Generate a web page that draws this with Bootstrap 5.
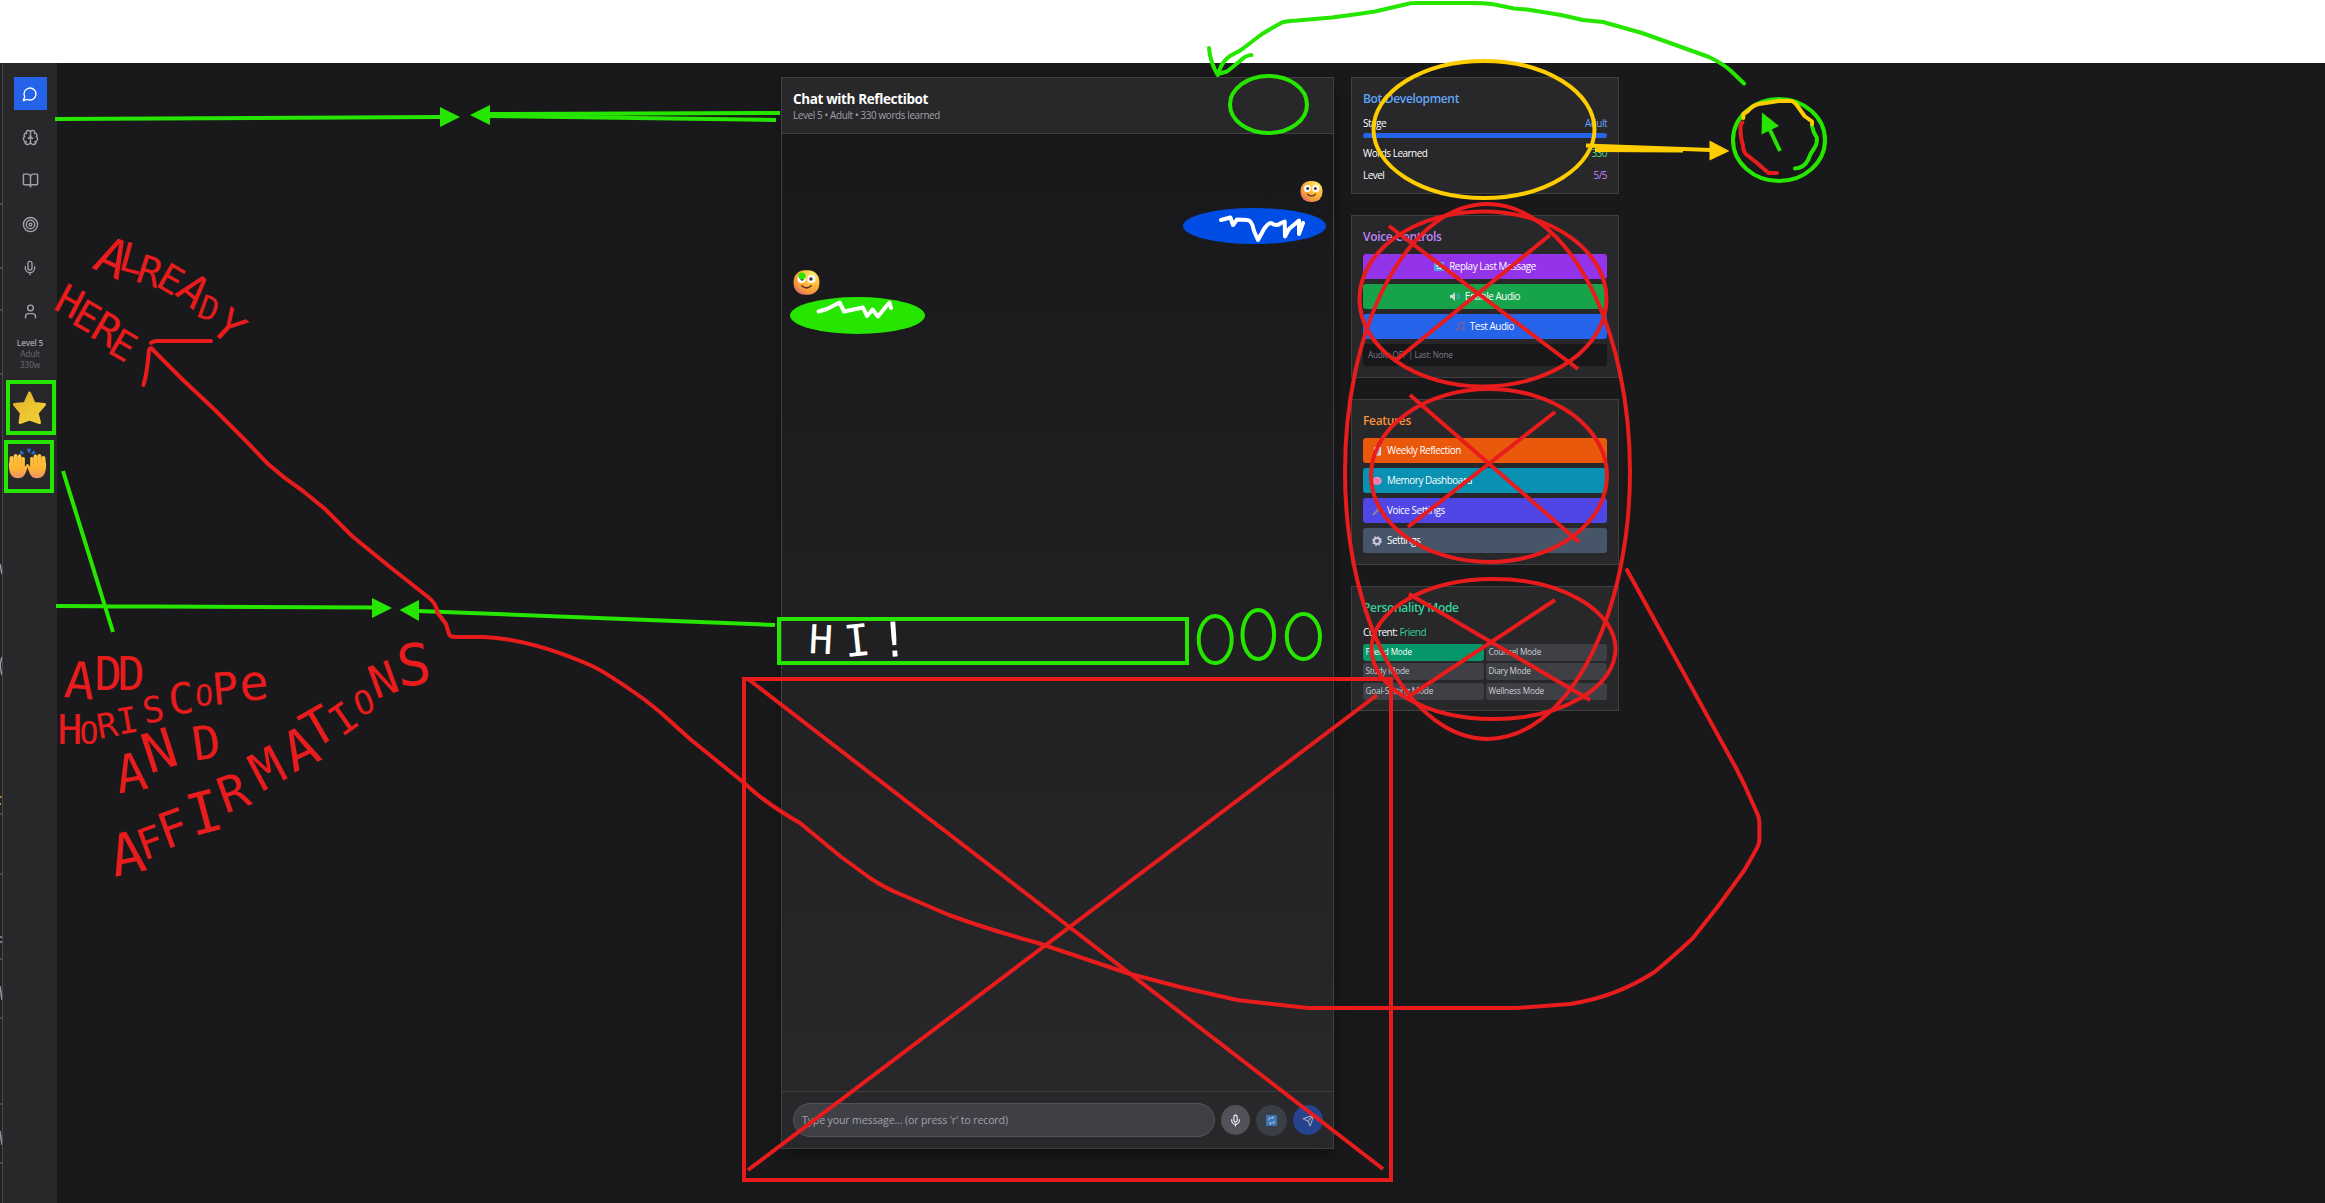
<!DOCTYPE html>
<html lang="en">
<head>
<meta charset="utf-8">
<meta name="viewport" content="width=device-width, initial-scale=1">
<title>Reflectibot</title>
<link href="https://cdn.jsdelivr.net/npm/bootstrap@5.3.0/dist/css/bootstrap.min.css" rel="stylesheet">
<style>
body{width:2325px;height:1203px;overflow:hidden;background:#fff;font-family:"Open Sans","Noto Sans",sans-serif;font-size:10px;line-height:1.2;color:#fff}
.topgap{height:63px}
.shell{height:1140px;background:#19191b}
.edge{width:3px;background:#222224;border-right:1px solid #4a4a4c}
.rail{width:54px;background:#28282a;padding-top:14px}
.rail-btn{width:33px;height:33px;margin-bottom:10.5px;color:#a1a1aa}
.rail-btn.on{background:#2563eb;color:#fff}
.rail-btn svg,.round svg{fill:none;stroke:currentColor;stroke-width:2;stroke-linecap:round;stroke-linejoin:round}
.stats{font-size:8.3px;line-height:11px;color:#6b6b74;margin-top:-1px;letter-spacing:-.2px}
.stats b{color:#a1a1aa;font-weight:600}
.chat{width:553px;height:1072px;margin:14px 0 0 724px;background:#28282a;border:1px solid #3f3f42;box-shadow:0 8px 14px rgba(0,0,0,.3)}
.chat-head{height:56px;padding:11px 11px 0;border-bottom:1px solid #3f3f42}
.chat-head h1{font-size:13.5px;font-weight:700;line-height:20px;margin:0;letter-spacing:-.37px}
.chat-head p{font-size:9.9px;line-height:12px;color:#a1a1aa;margin:0;letter-spacing:-.36px}
.feed{background:linear-gradient(#18181b,#28282a)}
.composer{height:57px;border-top:1px solid #3f3f42;padding:0 10px 0 11px}
.entry{width:422px;height:34px;border:1px solid #52525b;border-radius:17px;background:#3f3f46;color:#a1a1aa;font-size:10.6px;letter-spacing:-.15px;padding-left:8px;margin-right:6px}
.round{width:29px;height:30px;border-radius:50%;background:#52525b}
.side{width:268px;margin:14px 0 0 17px}
.panel{background:#28282a;border:1px solid #3f3f42;padding:11px 11px 0;margin-bottom:21px}
.panel h2{font-size:12px;font-weight:600;line-height:20px;margin:0;height:27px;letter-spacing:-.33px}
.p1 h2{height:23px}
.p1{height:117px}.p2{height:163px}.p3{height:166px}.p4{height:125px}
.line{height:22px;line-height:22px;font-weight:400;letter-spacing:-.52px}
.meter{height:5px;border-radius:3px;background:#2563eb;margin:-1px 0 4px}
.act{height:25px;border-radius:3px;margin-bottom:5px;font-size:9.9px;font-weight:500;gap:5px;letter-spacing:-.43px}
.act.lft{padding-left:9px}
.note{height:22px;border-radius:3px;background:#18181b;color:#7d7d86;font-size:8.2px;padding-left:5px;letter-spacing:-.27px}
.modes{display:grid;grid-template-columns:1fr 1fr;column-gap:2px;row-gap:2.6px}
.mode{height:16.8px;border-radius:3px;background:#3f3f46;color:#d0d0d4;font-size:8.2px;letter-spacing:-.18px;padding-left:2.5px;line-height:16px}
.marks{left:0;top:0;fill:none;stroke-width:4;stroke-linecap:round;stroke-linejoin:round}
.marks text{font-family:"DejaVu Sans Mono",monospace;stroke:none}
.sq{stroke-linecap:butt;stroke-linejoin:miter}
</style>
</head>
<body class="position-relative">
<div class="topgap"></div>
<div class="shell d-flex align-items-start">
  <div class="edge align-self-stretch">
    <svg class="d-block" width="2" height="1140" stroke="#4a4a4c" stroke-width="2"><path d="M0 141h2M0 205h2M0 247h2M0 311h2M0 751h2M0 811h2M0 896h2M0 955h2M0 1041h2M0 1100h2"/><path stroke="#9a9aa0" stroke-width="1.500" d="M0 501l2 10M2 594q-3 8 0 18M0 874h2M0 879h2M0 923l2 14M0 1068l2 14"/><path stroke="#c98a3a" d="M0 734h1.500M0 741h1"/></svg>
  </div>
  <nav class="rail align-self-stretch d-flex flex-column align-items-center">
    <div class="rail-btn on d-flex align-items-center justify-content-center"><svg width="16" height="16" viewBox="0 0 24 24"><path d="M7.900 20A9 9 0 1 0 4 16.100L2 22Z"/></svg></div>
    <div class="rail-btn d-flex align-items-center justify-content-center"><svg width="17" height="17" viewBox="0 0 24 24"><path d="M12 18V5M15 13a4.170 4.170 0 0 1-3-4 4.170 4.170 0 0 1-3 4M17.598 6.500A3 3 0 1 0 12 5a3 3 0 1 0-5.598 1.500M17.997 5.125a4 4 0 0 1 2.526 5.770M18 18a4 4 0 0 0 2-7.464M19.967 17.483A4 4 0 1 1 12 18a4 4 0 1 1-7.967-.517M6 18a4 4 0 0 1-2-7.464M6.003 5.125a4 4 0 0 0-2.526 5.770"/></svg></div>
    <div class="rail-btn d-flex align-items-center justify-content-center"><svg width="17" height="17" viewBox="0 0 24 24"><path d="M12 7v14M3 18a1 1 0 0 1-1-1V4a1 1 0 0 1 1-1h5a4 4 0 0 1 4 4 4 4 0 0 1 4-4h5a1 1 0 0 1 1 1v13a1 1 0 0 1-1 1h-6a3 3 0 0 0-3 3 3 3 0 0 0-3-3z"/></svg></div>
    <div class="rail-btn d-flex align-items-center justify-content-center"><svg width="17" height="17" viewBox="0 0 24 24"><circle cx="12" cy="12" r="10"/><circle cx="12" cy="12" r="6"/><circle cx="12" cy="12" r="2"/></svg></div>
    <div class="rail-btn d-flex align-items-center justify-content-center"><svg width="16" height="16" viewBox="0 0 24 24"><path d="M12 19v3M19 10v2a7 7 0 0 1-14 0v-2"/><rect x="9" y="2" width="6" height="13" rx="3"/></svg></div>
    <div class="rail-btn d-flex align-items-center justify-content-center"><svg width="17" height="17" viewBox="0 0 24 24"><path d="M19 21v-2a4 4 0 0 0-4-4H9a4 4 0 0 0-4 4v2"/><circle cx="12" cy="7" r="4"/></svg></div>
    <div class="stats text-center"><b>Level 5</b><br>Adult<br>330w</div>
  </nav>

  <main class="chat d-flex flex-column">
    <div class="chat-head"><h1>Chat with Reflectibot</h1><p>Level 5 • Adult • 330 words learned</p></div>
    <div class="feed flex-grow-1"></div>
    <div class="composer d-flex align-items-center">
      <div class="entry d-flex align-items-center">Type your message... (or press 'r' to record)</div>
      <div class="round d-flex align-items-center justify-content-center"><svg width="13" height="13" viewBox="0 0 24 24"><path d="M12 19v3M19 10v2a7 7 0 0 1-14 0v-2"/><rect x="9" y="2" width="6" height="13" rx="3"/></svg></div>
      <div class="round d-flex align-items-center justify-content-center" style="width:31px;height:31px;margin:0 6px;background:#393e47"><svg width="11" height="11" viewBox="0 0 11 11"><rect width="11" height="11" rx="1" fill="#3b74b4" stroke="none"/><path stroke="#a9b8c8" stroke-width="1.200" d="M3 5V3h4.500l-1-1M8 6v2H3.500l1 1"/></svg></div>
      <div class="round d-flex align-items-center justify-content-center" style="width:30px;background:#26438f;color:#a3a8b8"><svg width="13" height="13" viewBox="0 0 24 24"><path d="m22 2-7 20-4-9-9-4ZM22 2 11 13"/></svg></div>
    </div>
  </main>

  <aside class="side">
    <section class="panel p1">
      <h2 style="color:#60a5fa">Bot Development</h2>
      <div class="line d-flex justify-content-between"><span>Stage</span><span style="color:#60a5fa">Adult</span></div>
      <div class="meter"></div>
      <div class="line d-flex justify-content-between"><span>Words Learned</span><span style="color:#4ade80">330</span></div>
      <div class="line d-flex justify-content-between"><span>Level</span><span style="color:#c084fc">5/5</span></div>
    </section>
    <section class="panel p2">
      <h2 style="color:#c084fc">Voice Controls</h2>
      <div class="act d-flex align-items-center justify-content-center" style="background:#9333ea"><svg width="10" height="9"><rect width="10" height="9" fill="#4ba3e8"/><path d="M3 5V3h4M7 4v2.500H3" fill="none" stroke="#fff"/></svg><span>Replay Last Message</span></div>
      <div class="act d-flex align-items-center justify-content-center" style="background:#16a34a"><svg width="10" height="9"><path d="M0 3h2l3-3v9l-3-3H0z" fill="#d5d5dc"/><path d="M6.500 2q2 2.500 0 5M8 1q2.500 3.500 0 7" fill="none" stroke="#4ba3e8"/></svg><span>Enable Audio</span></div>
      <div class="act d-flex align-items-center justify-content-center" style="background:#2563eb"><svg width="9" height="9"><path d="M2.500 7.500V1.500L8 .5v6" fill="none" stroke="#74619c" stroke-width="1.300"/><circle cx="1.700" cy="7.500" r="1.500" fill="#74619c"/><circle cx="7" cy="6.700" r="1.500" fill="#74619c"/></svg><span>Test Audio</span></div>
      <div class="note d-flex align-items-center">Audio: OFF | Last: None</div>
    </section>
    <section class="panel p3">
      <h2 style="color:#fb923c">Features</h2>
      <div class="act lft d-flex align-items-center" style="background:#ea580c"><svg width="10" height="10"><rect x="2" y="1" width="7" height="8.500" fill="#d9d3dc"/><path d="M3.500 3h4M3.500 5h4M3.500 7h3" stroke="#7a6f86"/></svg><span>Weekly Reflection</span></div>
      <div class="act lft d-flex align-items-center" style="background:#0891b2"><svg width="10" height="10"><ellipse cx="5" cy="4.800" rx="4.800" ry="4" fill="#f48ac0"/><path d="M2 4q2-2 3 0t3-1M3 7q2-2 4 0" fill="none" stroke="#d05fa0" stroke-width=".8"/></svg><span>Memory Dashboard</span></div>
      <div class="act lft d-flex align-items-center" style="background:#4f46e5"><svg width="10" height="10"><path d="M1 9l5-5" stroke="#8b8ba0" stroke-width="1.800"/><circle cx="7" cy="3" r="2.400" fill="#77778a"/></svg><span>Voice Settings</span></div>
      <div class="act lft d-flex align-items-center" style="background:#475569"><svg width="10" height="10"><circle cx="5" cy="5" r="3" fill="none" stroke="#cfc6de" stroke-width="2"/><circle cx="5" cy="5" r="4.300" fill="none" stroke="#cfc6de" stroke-width="1.200" stroke-dasharray="1.700 1.680"/></svg><span>Settings</span></div>
    </section>
    <section class="panel p4 mb-0">
      <h2 style="color:#34d399">Personality Mode</h2>
      <div class="line" style="margin-top:-4px;height:23px">Current: <span style="color:#34d399">Friend</span></div>
      <div class="modes">
        <div class="mode text-white" style="background:#059669">Friend Mode</div><div class="mode">Counsel Mode</div>
        <div class="mode">Study Mode</div><div class="mode">Diary Mode</div>
        <div class="mode">Goal-Setting Mode</div><div class="mode">Wellness Mode</div>
      </div>
    </section>
  </aside>
</div>

<svg class="marks position-absolute" width="2325" height="1203" viewBox="0 0 2325 1203">
  <defs>
    <linearGradient id="gStar" x1="0" y1="0" x2="1" y2="1"><stop offset="0" stop-color="#e0a92c"/><stop offset=".5" stop-color="#ecc62f"/><stop offset="1" stop-color="#f3cf3d"/></linearGradient>
    <linearGradient id="gHand" x1="0" y1="0" x2="0" y2="1"><stop offset="0" stop-color="#ffcb45"/><stop offset=".6" stop-color="#fdb431"/><stop offset="1" stop-color="#ee8f6a"/></linearGradient>
    <radialGradient id="gFace" cx=".75" cy=".2" r=".95"><stop offset="0" stop-color="#fff06a"/><stop offset=".5" stop-color="#fdb338"/><stop offset=".8" stop-color="#f3923f"/><stop offset="1" stop-color="#d65c80"/></radialGradient>
    <g id="face" stroke="none"><rect x="-11" y="-10.500" width="22" height="21" rx="9.500" fill="url(#gFace)"/><circle cx="-4.200" cy="-3" r="3.500" fill="#fff"/><circle cx="4.200" cy="-3" r="3.500" fill="#fff"/><circle cx="-3.800" cy="-2.900" r="1.500" fill="#43303a"/><circle cx="3.800" cy="-2.900" r="1.500" fill="#43303a"/><path d="M-4 2.800q4 3.600 8 0" fill="none" stroke="#5b3436" stroke-width="1.300"/></g>
    <g id="palm" stroke="none"><path d="M-8-7q0-3 2-3t2 2q0-4 2-4t2.200 3q.3-3 2-2.600 2 .3 2 3.600 1-1.500 2.300-1 1.200.8.9 3v7l1.700-2.500q1.500-1 1.600.7l-2 6q-2 7-8 7-8 0-9-9-.8-6 .3-8z" fill="url(#gHand)"/><path d="M-4-8v5M0-9v6M4-7v5" stroke="#f29d2b" stroke-width=".8"/></g>
  </defs>

  <g stroke="#26e600">
    <g class="sq">
      <path d="M55 119L440 117M490 114L780 113M490 116L776 120M56 606L373 607.500M418 611L775 625M63 471L113 632"/>
      <rect x="8" y="382" width="46" height="51"/><rect x="6" y="442" width="46" height="49"/>
      <rect x="779" y="619" width="408" height="44"/>
      <path d="M1780 151L1769 128"/>
    </g>
    <path stroke="none" fill="#26e600" d="M460 117l-20-10v20zM470 115l20-10v20zM392 608l-20-10v20zM399.500 610l19.500-10v21zM1762 112.500L1779 126L1761.500 134.500z"/>
    <ellipse cx="1268.500" cy="104.500" rx="38.500" ry="28.500"/>
    <ellipse cx="1779" cy="140" rx="46" ry="41"/>
    <ellipse cx="1215.200" cy="639.500" rx="16.500" ry="23.500"/><ellipse cx="1258.300" cy="634.500" rx="15.800" ry="24.500"/><ellipse cx="1303.400" cy="636.500" rx="16.600" ry="22.500"/>
    <path d="M1744 83.500L1731 71Q1722 63 1709 57L1670 43L1642 33L1603 22L1583 20L1561 15L1527 9.500L1514 8.500L1497 5Q1490 3.500 1476 3H1416Q1410 3 1405 4.500L1375 11.500L1358 14L1332 17.500L1297 20.500Q1287 21 1282 22.500Q1272 28 1262 34L1241 50L1230 56Q1222 61 1218 74M1209 48Q1210 62 1217.700 75M1251.500 55Q1246 55 1240 61L1227 71.500L1218 74"/>
    <path d="M1812 126Q1813 132 1817 138Q1817 144 1815 147Q1810 154 1808 160Q1804 168 1795 168.500"/>
  </g>
  <g stroke="#fecd00">
    <ellipse cx="1484" cy="129.500" rx="110.500" ry="68.500"/>
    <path class="sq" d="M1586 145.500L1711 150M1595 150L1683 150.500"/><path stroke="none" fill="#fecd00" d="M1729.500 151l-20-10.500v20z"/>
    <path d="M1743.300 118V114L1748 111Q1753 105 1759 104L1778.500 101H1792L1796 104L1804.500 116L1812 121.500V124"/>
  </g>
  <g stroke="#e81c1c">
    <path d="M1742.500 122.500L1740.500 125V130Q1741 140 1743 145Q1743 152 1747 155L1757 163L1768.500 173H1777"/>
    <ellipse cx="1483" cy="299" rx="123.500" ry="87.500"/><ellipse cx="1489" cy="475.500" rx="118" ry="86.500"/><ellipse cx="1493.500" cy="649" rx="122" ry="70"/><ellipse cx="1487.500" cy="471.500" rx="142.500" ry="267.500"/>
    <path class="sq" d="M1389 226L1578 369M1395 361L1550 235M1410 395L1579 542M1408 527L1555 412M1409 594L1590 700M1411 695L1555 600M748 679L1383 1169M748 1170L1377 695"/>
    <rect class="sq" x="744" y="679" width="647" height="501"/>
    <path d="M143.500 385Q147 374 149 350Q151 346 153 350L183 380L215 410L245 440L268 464Q285 479 303 491L325 509L352 536L390 567L428 597Q437 604 437 612L446 624L449 634Q450 637 456 637H484Q530 639 590 665Q606 672 645 700L660 712L690 739L743 782Q765 803 800 823L840 856L870 878Q885 888 900 894L949 915Q990 930 1038 943L1127 973L1180 987L1237 1000Q1280 1005 1308 1008H1517L1570 1004Q1616 997 1654.500 972Q1676 954 1693 938Q1720 905 1744.500 870L1757 848Q1760 843 1759.400 835V822Q1759 817 1757 813L1744.500 785L1736 768L1627 570"/>
    <path d="M151 343Q153 340.500 160 341H211"/>
  </g>

  <ellipse cx="1254.500" cy="226" rx="71.500" ry="18" fill="#004de6"/>
  <ellipse cx="857.500" cy="315.500" rx="67.500" ry="18.500" fill="#26e600"/>
  <path stroke="#fff" d="M1221 220L1230.400 217.500L1233 225L1237 219.500L1247 220Q1252 220 1254 231L1258 240L1264 229Q1269 222 1271 223Q1277 227 1281 223L1284.700 221.500L1285 236.500L1289 229L1299 220.500V234L1303 223M818.600 311.500L827 309L839.600 302.500L844 311.500L863 307.500L867 316L872.500 309.500L878 316.500L884 309L889.400 302.500L891 308"/>
  <use href="#face" x="1311.500" y="191.500"/>
  <use href="#face" transform="translate(806.500 282.500) scale(1.170)"/><circle cx="802" cy="276" r="3.500" fill="#26e600"/>
  <path fill="url(#gStar)" stroke="url(#gStar)" stroke-width="3" d="M29.500 393l4.600 10.500 10.400 1-7.400 8.500 2.400 9.500-10-3.500-9.500 3.500 1.500-9.500-7-8.500 10.400-1z"/>
  <use href="#palm" transform="translate(17.500 466)"/><use href="#palm" transform="translate(37.500 466) scale(-1 1)"/>
  <path fill="#2070d8" d="M27.500 449.500l1.500 3.500 1.500-3.500zM21 451l2 1.500.5 1.200-2.500.3zM34 451l-2 1.500-.5 1.200 2.500.3z" stroke="#2070d8" stroke-width="1"/>
  <g id="words"></g>
</svg>

<script src="https://cdn.jsdelivr.net/npm/bootstrap@5.3.0/dist/js/bootstrap.bundle.min.js"></script>
<script>
// Marker captions: one entry per letter, [centre x, centre y, cap height, angle]
const captions = [
  ['ALREADY','#e81c1c',[[113,257,38,25],[132,258,29,15],[150,271,29,18],[171,279,28,30],[194,290,32,40],[209,308,24,20],[229,326,32,42]]],
  ['HERE','#e81c1c',[[70,301,30,28],[87,316,29,30],[107,329,31,30],[123,345,29,30]]],
  ['ADD','#e81c1c',[[80,680,37,5],[108,673,33,0],[131,673,33,0]]],
  ['HORISCOPe','#e81c1c',[[70,729,30,0],[89,732,23,0],[107,725,25,-10],[127,720,26,-10],[153,709,26,-10],[181,698,31,-5],[204,695,22,0],[225,688,32,-5],[254,682,36,-5]]],
  ['AND','#e81c1c',[[131,772,38,-10],[159,750,40,-18],[206,742,34,-8]]],
  ['AFFIRMATIONS','#e81c1c',[[127,853,42,-12],[150,842,31,-20],[173,828,36,-20],[204,812,42,-15],[233,792,36,-20],[267,768,38,-28],[300,748,40,-25],[318,726,37,-30],[343,718,30,-35],[364,702,24,-20],[383,679,33,-20],[414,664,42,-5]]],
  ['HI!','#ffffff',[[821,639,29,3],[857,640,32,-6],[894,639,35,-4]]]
];
const ns = 'http://www.w3.org/2000/svg';
for (const [word, color, spots] of captions) {
  const t = document.createElementNS(ns, 'text');
  t.setAttribute('fill', color);
  spots.forEach(([cx, cy, h, deg], i) => {
    const size = h / .729, a = deg * Math.PI / 180, dx = -.301 * size, dy = h / 2;
    const s = document.createElementNS(ns, 'tspan');
    s.textContent = word[i];
    s.setAttribute('font-size', size.toFixed(1));
    s.setAttribute('x', (cx + dx * Math.cos(a) - dy * Math.sin(a)).toFixed(1));
    s.setAttribute('y', (cy + dx * Math.sin(a) + dy * Math.cos(a)).toFixed(1));
    s.setAttribute('rotate', deg);
    t.appendChild(s);
  });
  document.getElementById('words').appendChild(t);
}
</script>
</body>
</html>
